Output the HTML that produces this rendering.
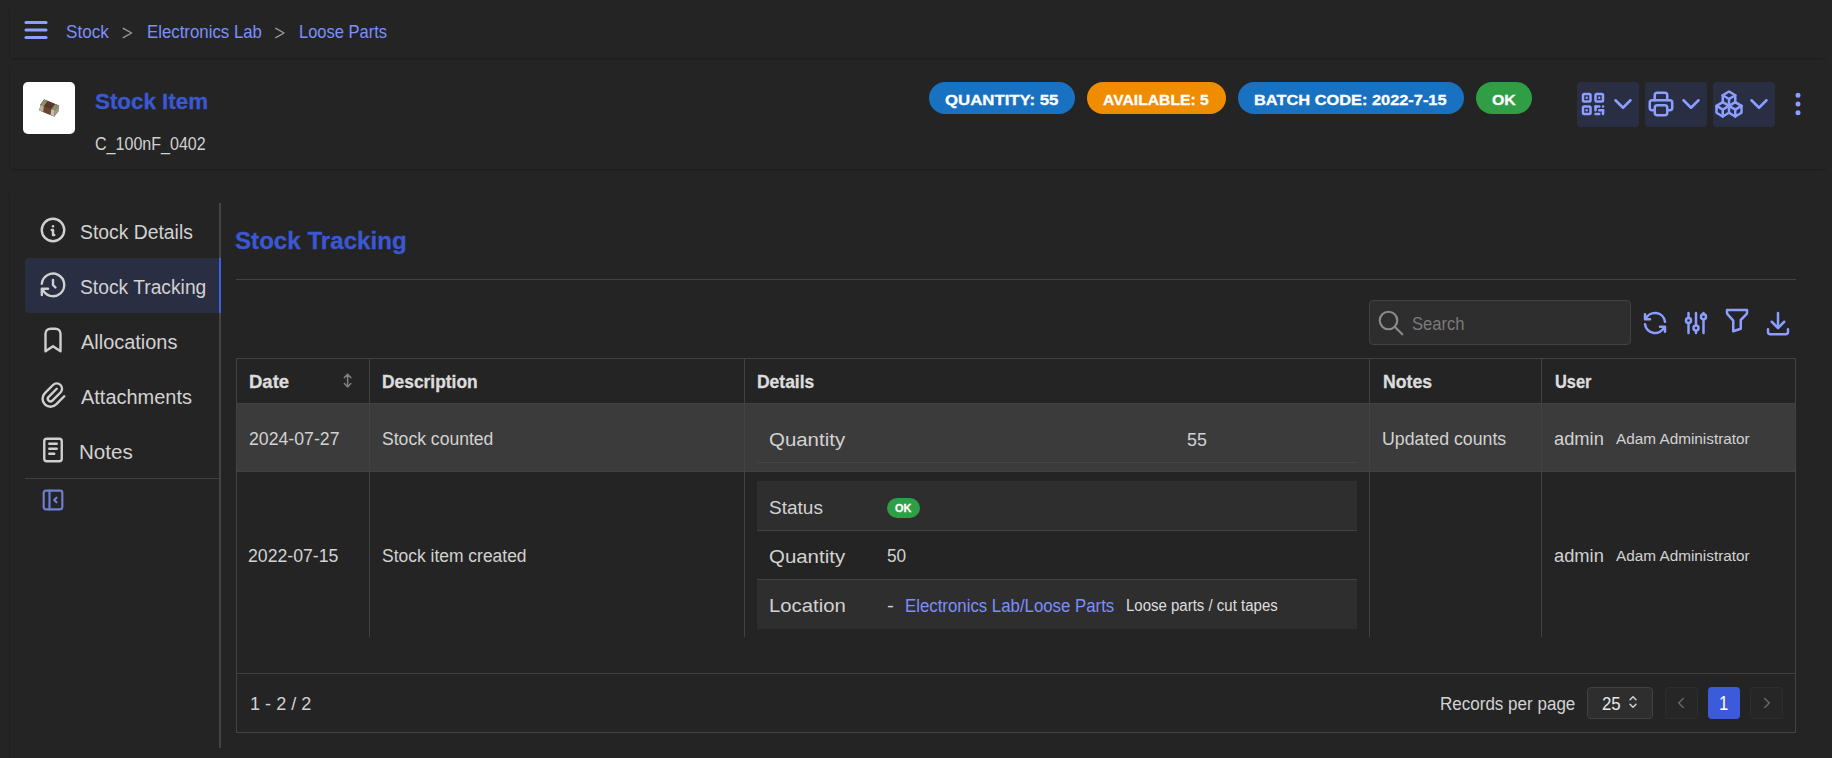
<!DOCTYPE html>
<html><head><meta charset="utf-8">
<style>
*{box-sizing:border-box;margin:0;padding:0}
html,body{width:1832px;height:758px;overflow:hidden;background:#242424;font-family:"Liberation Sans",sans-serif;color:#c9c9c9;position:relative}
.t{position:absolute;line-height:1;white-space:nowrap;transform-origin:0 0}
.b{position:absolute}
svg.ic{position:absolute;fill:none;stroke-linecap:round;stroke-linejoin:round;overflow:visible}
</style></head>
<body>
<div class="b" style="left:10px;top:7px;width:1816px;height:50.5px;border-radius:3px;box-shadow:-1px 0 0 rgba(0,0,0,.12),0 2px 2px -1px rgba(0,0,0,.28)"></div>
<div class="b" style="left:10px;top:66px;width:1816px;height:102.5px;border-radius:3px;box-shadow:-1px 0 0 rgba(0,0,0,.12),0 2px 2px -1px rgba(0,0,0,.28)"></div>
<div class="b" style="left:10px;top:190.5px;width:1816px;height:600px;border-radius:3px;box-shadow:-1px 0 0 rgba(0,0,0,.12),0 2px 2px -1px rgba(0,0,0,.28)"></div>
<svg class="ic" style="left:21px;top:15px" width="30" height="30" viewBox="0 0 24 24" stroke="#8c9eff" stroke-width="2.5" ><path d="M4 6h16"/><path d="M4 12h16"/><path d="M4 18h16"/></svg>
<div class="t" id="t0" style="left:65.70px;top:23.10px;font-size:18.2px;color:#7c8ffc;transform:scaleX(0.9406);">Stock</div>
<svg class="ic" style="left:0;top:0" width="1" height="1" stroke="#9a9a9a" stroke-width="1.4"><path d="M123.3 28.3L131.6 33L123.3 37.6"/><path d="M275.8 28.3L284.1 33L275.8 37.6"/></svg>
<div class="t" id="t1" style="left:146.56px;top:23.10px;font-size:18.2px;color:#7c8ffc;transform:scaleX(0.9243);">Electronics Lab</div>
<div class="t" id="t2" style="left:298.96px;top:23.10px;font-size:18.2px;color:#7c8ffc;transform:scaleX(0.9070);">Loose Parts</div>
<div class="b" style="left:23px;top:82px;width:52px;height:52px;background:#fff;border-radius:5px"></div>
<svg class="ic" style="left:0;top:0" width="1" height="1">
<polygon points="40.3,104.8 44.2,99.6 58.8,105.6 58.3,111.6 54.2,116.6 39.6,110.4" fill="#5e3d29"/>
<polygon points="40.3,104.8 44.2,99.6 58.8,105.6 54.8,110.6" fill="#573826"/>
<polygon points="40.3,104.8 54.8,110.6 54.2,116.6 39.6,110.4" fill="#6a4430"/>
<polygon points="40.3,104.8 44.2,99.6 47.6,101 43.8,106.2" fill="#8c8f6e"/>
<polygon points="40.3,104.8 43.8,106.2 43.2,112 39.6,110.4" fill="#b5b59c"/>
<polygon points="51.2,109.2 55.2,104.1 58.8,105.6 54.8,110.6" fill="#8c8f6e"/>
<polygon points="51.2,109.2 54.8,110.6 54.2,116.6 50.6,115" fill="#c2c2ac"/>
<polygon points="54.8,110.6 58.8,105.6 58.3,111.6 54.2,116.6" fill="#9c9c84"/>
</svg>
<div class="t" id="t3" style="left:95.25px;top:90.70px;font-size:22px;font-weight:bold;-webkit-text-stroke:0.3px currentColor;color:#3a58d3;transform:scaleX(1.0167);">Stock Item</div>
<div class="t" id="t4" style="left:95.08px;top:134.90px;font-size:18px;color:#d2d2d2;transform:scaleX(0.8918);">C_100nF_0402</div>
<div class="b" style="left:929px;top:82px;width:146px;height:32px;background:#1971c2;border-radius:16px"></div>
<div class="t" id="t5" style="left:944.56px;top:92.10px;font-size:15px;font-weight:bold;-webkit-text-stroke:0.3px currentColor;color:#fff;transform:scaleX(1.1189);">QUANTITY: 55</div>
<div class="b" style="left:1087px;top:82px;width:139px;height:32px;background:#f08c00;border-radius:16px"></div>
<div class="t" id="t6" style="left:1103.09px;top:92.10px;font-size:15px;font-weight:bold;-webkit-text-stroke:0.3px currentColor;color:#fff;transform:scaleX(1.0458);">AVAILABLE: 5</div>
<div class="b" style="left:1238px;top:82px;width:226px;height:32px;background:#1971c2;border-radius:16px"></div>
<div class="t" id="t7" style="left:1254.42px;top:92.10px;font-size:15px;font-weight:bold;-webkit-text-stroke:0.3px currentColor;color:#fff;transform:scaleX(1.0915);">BATCH CODE: 2022-7-15</div>
<div class="b" style="left:1476px;top:82px;width:56px;height:32px;background:#2f9e44;border-radius:16px"></div>
<div class="t" id="t8" style="left:1492.33px;top:92.10px;font-size:15px;font-weight:bold;-webkit-text-stroke:0.3px currentColor;color:#fff;transform:scaleX(1.0597);">OK</div>
<div class="b" style="left:1577px;top:82px;width:62px;height:45px;background:#2a2e42;border-radius:4px"></div>
<div class="b" style="left:1645px;top:82px;width:62px;height:45px;background:#2a2e42;border-radius:4px"></div>
<div class="b" style="left:1713px;top:82px;width:62px;height:45px;background:#2a2e42;border-radius:4px"></div>
<svg class="ic" style="left:1578px;top:89px" width="30" height="30" viewBox="0 0 24 24" stroke="#8c9eff" stroke-width="2" ><path d="M4 4m0 1a1 1 0 0 1 1 -1h4a1 1 0 0 1 1 1v4a1 1 0 0 1 -1 1h-4a1 1 0 0 1 -1 -1z"/><path d="M7 17l0 .01"/><path d="M14 4m0 1a1 1 0 0 1 1 -1h4a1 1 0 0 1 1 1v4a1 1 0 0 1 -1 1h-4a1 1 0 0 1 -1 -1z"/><path d="M7 7l0 .01"/><path d="M4 14m0 1a1 1 0 0 1 1 -1h4a1 1 0 0 1 1 1v4a1 1 0 0 1 -1 1h-4a1 1 0 0 1 -1 -1z"/><path d="M17 7l0 .01"/><path d="M14 14l3 0"/><path d="M20 14l0 .01"/><path d="M14 14l0 3"/><path d="M14 20l3 0"/><path d="M17 17l3 0"/><path d="M20 17l0 3"/></svg>
<svg class="ic" style="left:1608px;top:89px" width="30" height="30" viewBox="0 0 24 24" stroke="#8c9eff" stroke-width="2" ><path d="M6 9l6 6l6 -6"/></svg>
<svg class="ic" style="left:1646px;top:89px" width="30" height="30" viewBox="0 0 24 24" stroke="#8c9eff" stroke-width="2" ><path d="M17 17h2a2 2 0 0 0 2 -2v-4a2 2 0 0 0 -2 -2h-14a2 2 0 0 0 -2 2v4a2 2 0 0 0 2 2h2"/><path d="M17 9v-4a2 2 0 0 0 -2 -2h-6a2 2 0 0 0 -2 2v4"/><path d="M7 13m0 2a2 2 0 0 1 2 -2h6a2 2 0 0 1 2 2v4a2 2 0 0 1 -2 2h-6a2 2 0 0 1 -2 -2z"/></svg>
<svg class="ic" style="left:1676px;top:89px" width="30" height="30" viewBox="0 0 24 24" stroke="#8c9eff" stroke-width="2" ><path d="M6 9l6 6l6 -6"/></svg>
<svg class="ic" style="left:1714px;top:89px" width="30" height="30" viewBox="0 0 24 24" stroke="#8c9eff" stroke-width="2" ><path d="M7 16.5l-5 -3l5 -3l5 3v5.5l-5 3z"/><path d="M2 13.5v5.5l5 3"/><path d="M7 16.545l5 -3.03"/><path d="M17 16.5l-5 -3l5 -3l5 3v5.5l-5 3z"/><path d="M12 19l5 3"/><path d="M17 16.5l5 -3"/><path d="M12 13.5v-5.5l-5 -3l5 -3l5 3v5.5"/><path d="M7 5.03v5.455"/><path d="M12 8l5 -3"/></svg>
<svg class="ic" style="left:1744px;top:89px" width="30" height="30" viewBox="0 0 24 24" stroke="#8c9eff" stroke-width="2" ><path d="M6 9l6 6l6 -6"/></svg>
<svg class="ic" style="left:1783px;top:89px" width="30" height="30" viewBox="0 0 24 24" stroke="#8c9eff" stroke-width="2" ><path d="M12 12m-1 0a1 1 0 1 0 2 0a1 1 0 1 0 -2 0"/><path d="M12 19m-1 0a1 1 0 1 0 2 0a1 1 0 1 0 -2 0"/><path d="M12 5m-1 0a1 1 0 1 0 2 0a1 1 0 1 0 -2 0"/></svg>
<div class="b" style="left:25px;top:258px;width:195px;height:55px;background:#2a2e42;border-radius:4px 0 0 4px"></div>
<div class="b" style="left:219px;top:203px;width:2px;height:545px;background:#444444"></div>
<div class="b" style="left:219px;top:258px;width:2px;height:55px;background:#3f5fe0"></div>
<div class="b" style="left:25px;top:478px;width:194.5px;height:1px;background:#424242"></div>
<div class="t" id="t9" style="left:80.27px;top:222.80px;font-size:19.4px;color:#d2d2d2;transform:scaleX(0.9974);">Stock Details</div>
<svg class="ic" style="left:38px;top:214.7px" width="30" height="30" viewBox="0 0 24 24" stroke="#d0d0d0" stroke-width="1.9" ><path d="M3 12a9 9 0 1 0 18 0a9 9 0 0 0 -18 0"/><path d="M12 9h.01"/><path d="M11 12h1v4h1"/></svg>
<div class="t" id="t10" style="left:80.27px;top:277.80px;font-size:19.4px;color:#d2d2d2;transform:scaleX(0.9932);">Stock Tracking</div>
<svg class="ic" style="left:38px;top:269.7px" width="30" height="30" viewBox="0 0 24 24" stroke="#d0d0d0" stroke-width="1.9" ><path d="M12 8l0 4l2 2"/><path d="M3.05 11a9 9 0 1 1 .5 4m-.5 5v-5h5"/></svg>
<div class="t" id="t11" style="left:80.91px;top:332.80px;font-size:19.4px;color:#d2d2d2;transform:scaleX(1.0283);">Allocations</div>
<svg class="ic" style="left:38px;top:324.7px" width="30" height="30" viewBox="0 0 24 24" stroke="#d0d0d0" stroke-width="1.9" ><path d="M18 7v14l-6 -4l-6 4v-14a4 4 0 0 1 4 -4h4a4 4 0 0 1 4 4z"/></svg>
<div class="t" id="t12" style="left:80.89px;top:387.80px;font-size:19.4px;color:#d2d2d2;transform:scaleX(1.0299);">Attachments</div>
<svg class="ic" style="left:38px;top:379.7px" width="30" height="30" viewBox="0 0 24 24" stroke="#d0d0d0" stroke-width="1.9" ><path d="M15 7l-6.5 6.5a1.5 1.5 0 0 0 3 3l6.5 -6.5a3 3 0 0 0 -6 -6l-6.5 6.5a4.5 4.5 0 0 0 9 9l6.5 -6.5"/></svg>
<div class="t" id="t13" style="left:78.87px;top:442.80px;font-size:19.4px;color:#d2d2d2;transform:scaleX(1.0621);">Notes</div>
<svg class="ic" style="left:38px;top:434.7px" width="30" height="30" viewBox="0 0 24 24" stroke="#d0d0d0" stroke-width="1.9" ><path d="M5 3m0 2a2 2 0 0 1 2 -2h10a2 2 0 0 1 2 2v14a2 2 0 0 1 -2 2h-10a2 2 0 0 1 -2 -2z"/><path d="M9 7l6 0"/><path d="M9 11l6 0"/><path d="M9 15l4 0"/></svg>
<svg class="ic" style="left:39.2px;top:486.2px" width="28" height="28" viewBox="0 0 24 24" stroke="#6f80d6" stroke-width="1.8" ><path d="M4 4m0 2a2 2 0 0 1 2 -2h12a2 2 0 0 1 2 2v12a2 2 0 0 1 -2 2h-12a2 2 0 0 1 -2 -2z"/><path d="M9 4v16"/><path d="M15 10l-2 2l2 2"/></svg>
<div class="t" id="t14" style="left:235.39px;top:229.00px;font-size:24.8px;font-weight:bold;-webkit-text-stroke:0.3px currentColor;color:#3a58d3;transform:scaleX(0.9731);">Stock Tracking</div>
<div class="b" style="left:236px;top:279px;width:1560px;height:1px;background:#424242"></div>
<div class="b" style="left:1369px;top:300px;width:262px;height:45px;background:#2e2e2e;border:1px solid #424242;border-radius:4px"></div>
<svg class="ic" style="left:1375.8px;top:307.8px" width="30" height="30" viewBox="0 0 24 24" stroke="#8a8a8a" stroke-width="1.75" ><path d="M10 10m-7 0a7 7 0 1 0 14 0a7 7 0 1 0 -14 0"/><path d="M21 21l-6 -6"/></svg>
<div class="t" id="t15" style="left:1411.66px;top:314.70px;font-size:18px;color:#7a7a7a;transform:scaleX(0.9221);">Search</div>
<svg class="ic" style="left:1640px;top:308px" width="30" height="30" viewBox="0 0 24 24" stroke="#8c9eff" stroke-width="2" ><path d="M20 11a8.1 8.1 0 0 0 -15.5 -2m-.5 -4v4h4"/><path d="M4 13a8.1 8.1 0 0 0 15.5 2m.5 4v-4h-4"/></svg>
<svg class="ic" style="left:1681px;top:308px" width="30" height="30" viewBox="0 0 24 24" stroke="#8c9eff" stroke-width="2" ><path d="M4 10a2 2 0 1 0 4 0a2 2 0 0 0 -4 0"/><path d="M6 4v4"/><path d="M6 12v8"/><path d="M10 16a2 2 0 1 0 4 0a2 2 0 0 0 -4 0"/><path d="M12 4v10"/><path d="M12 18v2"/><path d="M16 7a2 2 0 1 0 4 0a2 2 0 0 0 -4 0"/><path d="M18 4v1"/><path d="M18 9v11"/></svg>
<svg class="ic" style="left:1722px;top:305px" width="30" height="30" viewBox="0 0 24 24" stroke="#8c9eff" stroke-width="2" ><path d="M4 4h16v2.172a2 2 0 0 1 -.586 1.414l-4.414 4.414v7l-6 2v-8.5l-4.48 -4.928a2 2 0 0 1 -.52 -1.345v-2.227z"/></svg>
<svg class="ic" style="left:1763px;top:308px" width="30" height="30" viewBox="0 0 24 24" stroke="#8c9eff" stroke-width="2" ><path d="M4 17v2a2 2 0 0 0 2 2h12a2 2 0 0 0 2 -2v-2"/><path d="M7 11l5 5l5 -5"/><path d="M12 4l0 12"/></svg>
<div class="b" style="left:236px;top:358px;width:1560px;height:375px;border:1px solid #424242"></div>
<div class="b" style="left:237px;top:403px;width:1558px;height:68.5px;background:#3b3b3b"></div>
<div class="b" style="left:237px;top:403px;width:1558px;height:1px;background:#424242"></div>
<div class="b" style="left:237px;top:471px;width:1558px;height:1px;background:#424242"></div>
<div class="b" style="left:237px;top:673px;width:1558px;height:1px;background:#424242"></div>
<div class="b" style="left:369px;top:359px;width:1px;height:278px;background:#424242"></div>
<div class="b" style="left:744px;top:359px;width:1px;height:278px;background:#424242"></div>
<div class="b" style="left:1369px;top:359px;width:1px;height:278px;background:#424242"></div>
<div class="b" style="left:1541px;top:359px;width:1px;height:278px;background:#424242"></div>
<div class="t" id="t16" style="left:248.52px;top:372.80px;font-size:18px;font-weight:bold;-webkit-text-stroke:0.3px currentColor;color:#dcdcdc;transform:scaleX(1.0288);">Date</div>
<div class="t" id="t17" style="left:381.93px;top:372.80px;font-size:18px;font-weight:bold;-webkit-text-stroke:0.3px currentColor;color:#dcdcdc;transform:scaleX(0.9663);">Description</div>
<div class="t" id="t18" style="left:757.02px;top:372.80px;font-size:18px;font-weight:bold;-webkit-text-stroke:0.3px currentColor;color:#dcdcdc;transform:scaleX(0.9705);">Details</div>
<div class="t" id="t19" style="left:1382.83px;top:372.80px;font-size:18px;font-weight:bold;-webkit-text-stroke:0.3px currentColor;color:#dcdcdc;transform:scaleX(0.9804);">Notes</div>
<div class="t" id="t20" style="left:1555.44px;top:372.80px;font-size:18px;font-weight:bold;-webkit-text-stroke:0.3px currentColor;color:#dcdcdc;transform:scaleX(0.9111);">User</div>
<svg class="ic" style="left:0;top:0" width="1" height="1" stroke="#808080" stroke-width="1.5"><path d="M347.6 374.2V387M344.4 377.6L347.6 374.2L350.8 377.6M344.4 383.6L347.6 387L350.8 383.6"/></svg>
<div class="t" id="t21" style="left:248.51px;top:429.90px;font-size:18.3px;color:#d2d2d2;transform:scaleX(0.9676);">2024-07-27</div>
<div class="t" id="t22" style="left:381.95px;top:429.90px;font-size:18px;color:#d2d2d2;transform:scaleX(0.9765);">Stock counted</div>
<div class="b" style="left:757px;top:462px;width:600px;height:1px;background:#464646"></div>
<div class="t" id="t23" style="left:769.00px;top:429.50px;font-size:19.2px;color:#d2d2d2;transform:scaleX(1.0649);">Quantity</div>
<div class="t" id="t24" style="left:1187.13px;top:429.50px;font-size:19.2px;color:#d2d2d2;transform:scaleX(0.9279);">55</div>
<div class="t" id="t25" style="left:1382.48px;top:429.20px;font-size:19.2px;color:#d2d2d2;transform:scaleX(0.9239);">Updated counts</div>
<div class="t" id="t26" style="left:1553.95px;top:429.30px;font-size:19.2px;color:#d2d2d2;transform:scaleX(0.9544);">admin</div>
<div class="t" id="t27" style="left:1616.06px;top:431.20px;font-size:15.2px;color:#d2d2d2;transform:scaleX(1.0085);">Adam Administrator</div>
<div class="t" id="t28" style="left:248.20px;top:546.60px;font-size:18.3px;color:#d2d2d2;transform:scaleX(0.9654);">2022-07-15</div>
<div class="t" id="t29" style="left:381.54px;top:546.60px;font-size:18px;color:#d2d2d2;transform:scaleX(0.9698);">Stock item created</div>
<div class="b" style="left:757px;top:481px;width:600px;height:49px;background:#2e2e2e"></div>
<div class="b" style="left:757px;top:530px;width:600px;height:1px;background:#424242"></div>
<div class="b" style="left:757px;top:579px;width:600px;height:1px;background:#424242"></div>
<div class="b" style="left:757px;top:580px;width:600px;height:49px;background:#2e2e2e"></div>
<div class="t" id="t30" style="left:769.44px;top:498.20px;font-size:19.2px;color:#d2d2d2;transform:scaleX(0.9913);">Status</div>
<div class="b" style="left:887.3px;top:498px;width:32.6px;height:20px;background:#2f9e44;border-radius:10px"></div>
<div class="t" id="t31" style="left:895.10px;top:503.00px;font-size:11.5px;font-weight:bold;-webkit-text-stroke:0.3px currentColor;color:#fff;transform:scaleX(0.9473);">OK</div>
<div class="t" id="t32" style="left:769.00px;top:546.50px;font-size:19.2px;color:#d2d2d2;transform:scaleX(1.0649);">Quantity</div>
<div class="t" id="t33" style="left:886.84px;top:546.00px;font-size:19.2px;color:#d2d2d2;transform:scaleX(0.8985);">50</div>
<div class="t" id="t34" style="left:768.57px;top:596.00px;font-size:19.2px;color:#d2d2d2;transform:scaleX(1.0592);">Location</div>
<div class="t" id="t35" style="left:886.96px;top:596.00px;font-size:19.2px;color:#d2d2d2;transform:scaleX(1.0877);">-</div>
<div class="t" id="t36" style="left:905.22px;top:597.00px;font-size:18px;color:#7c8ffc;transform:scaleX(0.9336);">Electronics Lab/Loose Parts</div>
<div class="t" id="t37" style="left:1126.37px;top:598.00px;font-size:15.6px;color:#dedede;transform:scaleX(0.9618);">Loose parts / cut tapes</div>
<div class="t" id="t38" style="left:1553.95px;top:546.30px;font-size:19.2px;color:#d2d2d2;transform:scaleX(0.9544);">admin</div>
<div class="t" id="t39" style="left:1616.06px;top:548.20px;font-size:15.2px;color:#d2d2d2;transform:scaleX(1.0085);">Adam Administrator</div>
<div class="t" id="t40" style="left:249.58px;top:695.00px;font-size:18.3px;color:#d2d2d2;transform:scaleX(0.9901);">1 - 2 / 2</div>
<div class="t" id="t41" style="left:1440.16px;top:695.20px;font-size:18px;color:#d2d2d2;transform:scaleX(0.9457);">Records per page</div>
<div class="b" style="left:1587px;top:687px;width:66px;height:32px;background:#2e2e2e;border:1px solid #424242;border-radius:4px"></div>
<div class="t" id="t42" style="left:1601.96px;top:695.30px;font-size:18.3px;color:#e8e8e8;transform:scaleX(0.9206);">25</div>
<svg class="ic" style="left:1624px;top:693px" width="18" height="18" viewBox="0 0 24 24" stroke="#d2d2d2" stroke-width="2" ><path d="M8 9l4 -4l4 4"/><path d="M16 15l-4 4l-4 -4"/></svg>
<div class="b" style="left:1665px;top:687px;width:33px;height:32px;background:#262626;border:1px solid #2e2e2e;border-radius:4px"></div>
<svg class="ic" style="left:1672px;top:694px" width="18" height="18" viewBox="0 0 24 24" stroke="#6a6a6a" stroke-width="2" ><path d="M15 6l-6 6l6 6"/></svg>
<div class="b" style="left:1708px;top:687px;width:32px;height:32px;background:#3b5bdb;border-radius:4px"></div>
<div class="t" id="t43" style="left:1719.45px;top:694.30px;font-size:19.6px;color:#fff;transform:scaleX(0.8507);">1</div>
<div class="b" style="left:1750px;top:687px;width:33px;height:32px;background:#262626;border:1px solid #2e2e2e;border-radius:4px"></div>
<svg class="ic" style="left:1758px;top:694px" width="18" height="18" viewBox="0 0 24 24" stroke="#6a6a6a" stroke-width="2" ><path d="M9 6l6 6l-6 6"/></svg>
</body></html>
